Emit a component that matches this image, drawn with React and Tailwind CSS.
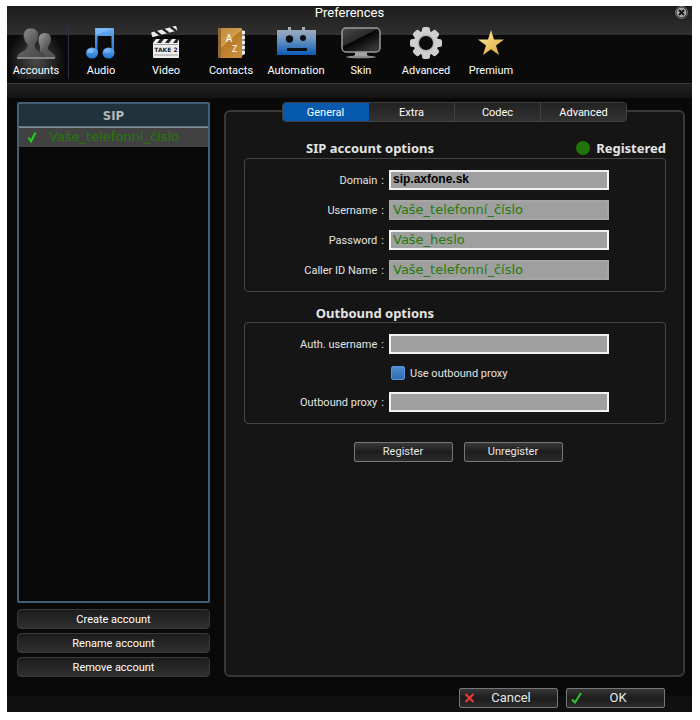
import React, { useState } from "react";

function AccountsIcon() {
  return (
    <svg width="40" height="34" viewBox="0 0 40 34">
      <defs>
        <linearGradient id="people" x1="0" y1="0" x2="1" y2="1">
          <stop offset="0" stopColor="#a0a0a0" />
          <stop offset="0.5" stopColor="#5c5c5c" />
          <stop offset="1" stopColor="#484848" />
        </linearGradient>
      </defs>
      <path d="M29 7c3.800 0 6 2.800 6 6.200 0 2.800-1 5-2.700 6.800l-.5 2.500c.5 3.500 7.700 4 8 9H24V20c-1-2-1.500-4-1.500-6.800C22.500 9.800 25.200 7 29 7z" fill="url(#people)" />
      <path d="M15 2c4.800 0 7.500 3.400 7.500 7.500 0 3.500-1.500 6.500-3.500 8.500v3c.5 4 9.500 4.500 9.500 10.500H1C1 25.500 10.500 25 11 21v-3c-2-2-3.500-5-3.500-8.500C7.500 5.400 10.200 2 15 2z" fill="url(#people)" stroke="#2c2c2c" strokeWidth="0.7" />
      <path d="M1 31h38v2H1z" fill="#858585" />
    </svg>
  );
}

function AudioIcon() {
  return (
    <svg width="34" height="34" viewBox="0 0 34 34">
      <defs>
        <linearGradient id="note" x1="0" y1="0" x2="0" y2="1">
          <stop offset="0" stopColor="#6aaef2" />
          <stop offset="1" stopColor="#1f74d2" />
        </linearGradient>
      </defs>
      <g fill="url(#note)">
        <path d="M11 2h19v25h-2.500V10H13.500v17H11z" />
        <ellipse cx="8" cy="27" rx="6" ry="5.500" />
        <ellipse cx="24.500" cy="27" rx="6" ry="5.500" />
      </g>
      <path d="M11.500 2.500H29L12 9z" fill="#8cc4fa" opacity="0.6" />
      <ellipse cx="6.500" cy="25" rx="3" ry="2" fill="#b5dafc" opacity="0.5" />
      <ellipse cx="23" cy="25" rx="3" ry="2" fill="#b5dafc" opacity="0.3" />
    </svg>
  );
}

function VideoIcon() {
  return (
    <svg width="34" height="34" viewBox="0 0 34 34">
      <g transform="rotate(-15 4 10)">
        <rect x="3" y="6" width="26" height="5" rx="1" fill="#ededed" />
        <path d="M6 6h3l4 5h-3zM14 6h3l4 5h-3zM22 6h3l4 5h-3z" fill="#222" />
      </g>
      <rect x="4" y="13" width="26" height="19" rx="1" fill="#eeeeee" />
      <path d="M4 13h3l-3 4zM11 13h4l-3 4H8zM19 13h4l-3 4h-4zM27 13h3l-2 4h-4z" fill="#222" />
      <path d="M5 18.500h24M5 29h24" stroke="#888" strokeWidth="0.8" />
      <text x="17" y="26" textAnchor="middle" fontSize="6" fontWeight="bold" fontFamily="DejaVu Sans, sans-serif" fill="#222">TAKE 2</text>
    </svg>
  );
}

function ContactsIcon() {
  return (
    <svg width="34" height="34" viewBox="0 0 34 34">
      <defs>
        <linearGradient id="book" x1="0" y1="0" x2="0.7" y2="1">
          <stop offset="0" stopColor="#bd8b3c" />
          <stop offset="0.500" stopColor="#d09c4e" />
          <stop offset="0.510" stopColor="#b87a25" />
          <stop offset="1" stopColor="#c98d3a" />
        </linearGradient>
      </defs>
      <path d="M27 4l4 1v3l-1 1 1 1v3l-1 1 1 1v3l-1 1 1 1v3l-1 1 1 1v3l-4 2z" fill="#e9e9e9" />
      <path d="M28 9h3M28 14h3M28 19h3M28 24h3" stroke="#444" strokeWidth="1" />
      <rect x="4" y="2" width="24" height="30" rx="1" fill="url(#book)" />
      <path d="M4 2h3v30H4z" fill="#93682e" />
      <text x="15" y="16" textAnchor="middle" fontSize="10" fontFamily="Noto Sans, sans-serif" fill="#fff">A</text>
      <text x="20.500" y="26" textAnchor="middle" fontSize="9" fontFamily="Noto Sans, sans-serif" fill="#fff">Z</text>
    </svg>
  );
}

function AutomationIcon() {
  return (
    <svg width="40" height="34" viewBox="0 0 40 34">
      <defs>
        <linearGradient id="robot" x1="0" y1="0" x2="0" y2="1">
          <stop offset="0" stopColor="#a9aeb5" />
          <stop offset="0.350" stopColor="#7d9dc2" />
          <stop offset="1" stopColor="#0a5bb8" />
        </linearGradient>
      </defs>
      <path d="M12 1h3v3h11V1h3v3h11v25H1V4h11z" fill="url(#robot)" />
      <circle cx="13.500" cy="13" r="3.700" fill="#0b0f14" />
      <circle cx="27" cy="12" r="3" fill="#0b0f14" />
      <path d="M11 22h20v3H11z" fill="#0b0f14" />
    </svg>
  );
}

function SkinIcon() {
  return (
    <svg width="40" height="34" viewBox="0 0 40 34">
      <defs>
        <linearGradient id="screen" x1="0" y1="0" x2="0.800" y2="1">
          <stop offset="0" stopColor="#4c4c4c" />
          <stop offset="0.460" stopColor="#2c2c2c" />
          <stop offset="0.500" stopColor="#050505" />
          <stop offset="1" stopColor="#3b3b3b" />
        </linearGradient>
      </defs>
      <path d="M14 26h12v3l4 2H10l4-2z" fill="#a5a5a5" />
      <ellipse cx="20" cy="31" rx="15" ry="1.300" fill="#8a8a8a" />
      <rect x="1" y="2" width="38" height="24" rx="4" fill="url(#screen)" stroke="#9a9a9a" strokeWidth="1.500" />
    </svg>
  );
}

function AdvancedIcon() {
  return (
    <svg width="34" height="34" viewBox="0 0 34 34">
      <g fill="#cfcfcf">
        {[0, 45, 90, 135].map((a) => (
          <rect key={a} x="13" y="1" width="8" height="32" rx="2.500" transform={`rotate(${a} 17 17)`} />
        ))}
        <circle cx="17" cy="17" r="12.500" />
      </g>
      <circle cx="17" cy="17" r="8.500" fill="#b4b4b4" />
      <circle cx="17" cy="17" r="7" fill="#0a0a0a" />
    </svg>
  );
}

function PremiumIcon() {
  return (
    <svg width="34" height="34" viewBox="0 0 34 34">
      <defs>
        <linearGradient id="star" x1="0" y1="0" x2="1" y2="1">
          <stop offset="0" stopColor="#ffeeb0" />
          <stop offset="0.500" stopColor="#efc76a" />
          <stop offset="1" stopColor="#dba53c" />
        </linearGradient>
      </defs>
      <path d="M17 4l3 9.500h10L22 19.500l3 9.500-8-5.800L9 29l3-9.500-8-6h10z" fill="url(#star)" />
    </svg>
  );
}

const SECTIONS = [
  { label: "Accounts", Icon: AccountsIcon },
  { label: "Audio", Icon: AudioIcon },
  { label: "Video", Icon: VideoIcon },
  { label: "Contacts", Icon: ContactsIcon },
  { label: "Automation", Icon: AutomationIcon },
  { label: "Skin", Icon: SkinIcon },
  { label: "Advanced", Icon: AdvancedIcon },
  { label: "Premium", Icon: PremiumIcon },
];

const TABS = ["General", "Extra", "Codec", "Advanced"];

const GREEN_INPUT = "font-['DejaVu_Sans',sans-serif] text-[13px] text-[#257a0c]";

function Field({ id, label, framed, type = "text", value = "", className = "" }) {
  return (
    <div className="flex h-5 items-center gap-[5px]">
      <label htmlFor={id} className="flex w-[139px] shrink-0 justify-end gap-1 pt-0.5">
        {label} <span>:</span>
      </label>
      <input
        id={id}
        type={type}
        defaultValue={value}
        className={`h-5 w-[220px] min-w-0 border-2 bg-[#9f9f9f] px-0.5 pb-0.5 outline-none ${
          framed ? "border-[#f2f2f2]" : "border-[#a6a6a6]"
        } ${className}`}
      />
    </div>
  );
}

function SmallButton({ children, icon }) {
  return (
    <button className="flex h-5 w-[99px] items-center rounded-xs border border-[#777] bg-linear-to-b from-[#383838] via-[#1d1d1d] to-[#2b2b2b] px-1 text-[#e8e8e8]">
      {icon}
      <span className={`flex-1 text-center ${icon ? "pr-1.5" : ""}`}>{children}</span>
    </button>
  );
}

export default function App() {
  const [section, setSection] = useState("Accounts");
  const [tab, setTab] = useState("General");

  return (
    <div className="flex min-h-screen flex-col bg-white pt-1.5 pr-2 pb-2 pl-[7px] font-[Roboto,sans-serif] text-[11px] leading-4 text-[#e4e4e4]">
      <div className="flex flex-1 flex-col overflow-hidden bg-[#090909]">
        <header className="border-b border-[#383838] bg-[linear-gradient(to_bottom,#1c1c1c_0px,#303030_29px,#0a0a0a_29px)]">
          <div className="grid h-3.5 grid-cols-[1fr_auto_1fr] items-start">
            <h1 className="col-start-2 text-[13px] leading-3.5 text-white">Preferences</h1>
            <button aria-label="Close" className="mr-1 justify-self-end">
              <svg width="13" height="13" viewBox="0 0 13 13" className="block">
                <circle cx="6.500" cy="6.500" r="6" fill="#111" stroke="#777" strokeWidth="1" />
                <circle cx="6.500" cy="6.500" r="5" fill="#a8a8a8" />
                <path d="M4 4l5 5M9 4l-5 5" stroke="#111" strokeWidth="1.800" />
              </svg>
            </button>
          </div>
          <nav className="-ml-[3px] flex pt-1.5 pb-1">
            {SECTIONS.map(({ label, Icon }) => (
              <button
                key={label}
                onClick={() => setSection(label)}
                className={`flex h-[53px] w-[65px] flex-col items-center gap-[3px] border-r text-white ${
                  section === label
                    ? "border-[#27324a] bg-[radial-gradient(ellipse_at_50%_65%,#4a4a4a,transparent_65%)]"
                    : "border-transparent"
                }`}
              >
                <Icon />
                <span>{label}</span>
              </button>
            ))}
          </nav>
        </header>
        <div className="h-3.5 bg-linear-to-b from-[#202020] to-[#131313]" />

        <main className="flex flex-1 gap-3 pt-1 pr-[7px] pl-2">
          <aside className="flex w-[197px] shrink-0 flex-col gap-1 pr-0.5 pl-0.5">
            <div className="mb-0.5 flex-1 rounded-xs border-2 border-[#41617a] bg-[#090909]">
              <h2 className="h-[23px] border-b border-[#55788e] bg-[#20323c] text-center font-['DejaVu_Sans_Condensed','DejaVu_Sans',sans-serif] text-[13px] leading-[23px] font-bold text-[#b8b8b8]">
                SIP
              </h2>
              <button className="flex h-5 w-full items-center gap-3 border-t border-[#8a8a8a] bg-[#414141] pb-0.5 pl-2 font-['DejaVu_Sans',sans-serif] text-[13px] text-[#257a0c]">
                <svg width="10" height="12" viewBox="0 0 10 12">
                  <path d="M1.500 6.500L4 10.500 8.500 1.500" fill="none" stroke="#1fd01f" strokeWidth="2" />
                </svg>
                Vaše_telefonní_číslo
              </button>
            </div>
            {["Create account", "Rename account", "Remove account"].map((label) => (
              <button key={label} className="h-5 rounded-sm border border-[#3a3a3a] bg-linear-to-b from-[#1c1c1c] to-[#303030] pt-0.5 text-white">
                {label}
              </button>
            ))}
          </aside>

          <section className="mt-2 flex min-w-0 flex-1 flex-col rounded-md border-2 border-[#383838] bg-[#151515]">
            <div className="-mt-2.5 flex h-5 w-[345px] self-center overflow-hidden rounded-sm border border-[#404040] bg-[#2b2b2b]">
              {TABS.map((t) => (
                <button
                  key={t}
                  onClick={() => setTab(t)}
                  className={`flex-1 border-r pt-0.5 text-white last:border-r-0 ${
                    tab === t
                      ? "border-[#0a59b0] bg-[#0759ae]"
                      : "border-[#404040] bg-linear-to-b from-[#222] to-[#333]"
                  }`}
                >
                  {t}
                </button>
              ))}
            </div>

            <form className="flex flex-col pt-[18px] pr-[17px] pl-[18px]" onSubmit={(e) => e.preventDefault()}>
              <div className="flex h-[18px] items-start justify-between font-['Noto_Sans',sans-serif] text-[13px] font-bold">
                <h2 className="w-[190px] text-right">SIP account options</h2>
                <div className="flex items-center gap-1.5">
                  <span className="size-3.5 rounded-full bg-[#227609]" />
                  Registered
                </div>
              </div>
              <div className="flex flex-col gap-2.5 rounded-sm border border-[#454545] py-[11px]">
                <Field id="domain" label="Domain" framed value="sip.axfone.sk" className="font-['Liberation_Sans',sans-serif] text-[12px] font-bold text-black" />
                <Field id="username" label="Username" value="Vaše_telefonní_číslo" className={GREEN_INPUT} />
                <Field id="password" label="Password" framed value="Vaše_heslo" className={GREEN_INPUT} />
                <Field id="caller" label="Caller ID Name" value="Vaše_telefonní_číslo" className={GREEN_INPUT} />
              </div>

              <h2 className="mt-[13px] h-[17px] w-[190px] text-right font-['Noto_Sans',sans-serif] text-[13px] font-bold">
                Outbound options
              </h2>
              <div className="flex flex-col gap-[9px] rounded-sm border border-[#454545] py-[11px]">
                <Field id="auth" label="Auth. username" framed />
                <label className="ml-[146px] flex h-5 items-center gap-[5px]">
                  <input
                    type="checkbox"
                    className="size-3.5 appearance-none rounded-xs border border-[#5c93d6] bg-linear-to-b from-[#4f8cd4] to-[#2f6cb4]"
                  />
                  <span className="pt-0.5">Use outbound proxy</span>
                </label>
                <Field id="proxy" label="Outbound proxy" framed />
              </div>

              <div className="mt-[18px] flex justify-center gap-[11px] pl-1.5">
                <SmallButton>Register</SmallButton>
                <SmallButton>Unregister</SmallButton>
              </div>
            </form>
          </section>
        </main>

        <footer className="flex justify-end gap-2 bg-[linear-gradient(to_bottom,#090909_19px,#101010_19px)] pt-[11px] pr-[27px] pb-1 text-[13px]">
          <SmallButton
            icon={
              <svg width="11" height="12" viewBox="0 0 11 12">
                <path d="M1.500 2l8 8M9.500 2l-8 8" stroke="#e63a3a" strokeWidth="2.200" />
              </svg>
            }
          >
            Cancel
          </SmallButton>
          <SmallButton
            icon={
              <svg width="11" height="12" viewBox="0 0 11 12">
                <path d="M1 7.500l3 3L10 1" fill="none" stroke="#2fc52f" strokeWidth="2" />
              </svg>
            }
          >
            OK
          </SmallButton>
        </footer>
      </div>
    </div>
  );
}
